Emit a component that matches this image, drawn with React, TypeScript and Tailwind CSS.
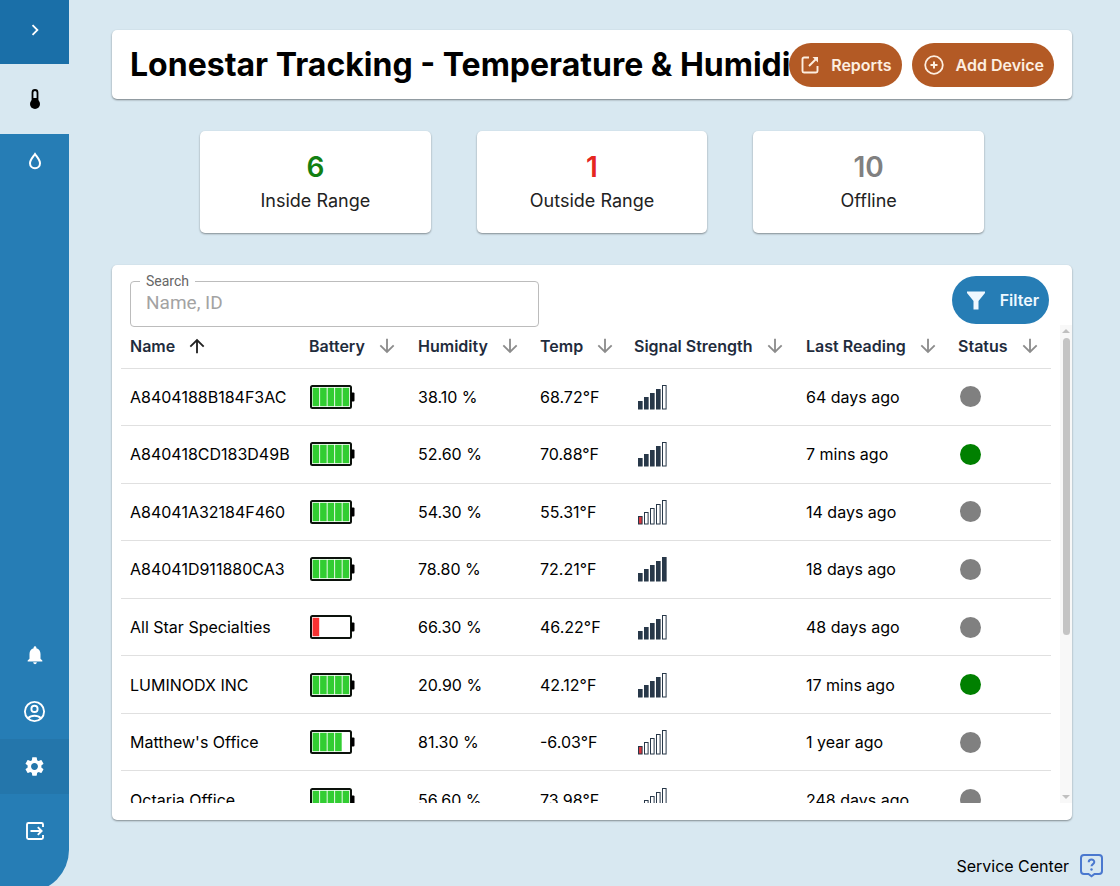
import React, { useState } from 'react';
import {
  MdArrowDownward,
  MdArrowUpward,
  MdChevronRight,
  MdNotifications,
  MdSettings,
} from 'react-icons/md';

interface Device {
  name: string;
  battery: number;
  humidity: string;
  temp: string;
  signal: number;
  lastReading: string;
  online: boolean;
}

const devices: Device[] = [
  { name: 'A8404188B184F3AC', battery: 5, humidity: '38.10 %', temp: '68.72°F', signal: 4, lastReading: '64 days ago', online: false },
  { name: 'A840418CD183D49B', battery: 5, humidity: '52.60 %', temp: '70.88°F', signal: 4, lastReading: '7 mins ago', online: true },
  { name: 'A84041A32184F460', battery: 5, humidity: '54.30 %', temp: '55.31°F', signal: 1, lastReading: '14 days ago', online: false },
  { name: 'A84041D911880CA3', battery: 5, humidity: '78.80 %', temp: '72.21°F', signal: 5, lastReading: '18 days ago', online: false },
  { name: 'All Star Specialties', battery: 1, humidity: '66.30 %', temp: '46.22°F', signal: 4, lastReading: '48 days ago', online: false },
  { name: 'LUMINODX INC', battery: 5, humidity: '20.90 %', temp: '42.12°F', signal: 4, lastReading: '17 mins ago', online: true },
  { name: "Matthew's Office", battery: 4, humidity: '81.30 %', temp: '-6.03°F', signal: 1, lastReading: '1 year ago', online: false },
  { name: 'Octaria Office', battery: 5, humidity: '56.60 %', temp: '73.98°F', signal: 1, lastReading: '248 days ago', online: false },
];

const columns = [
  { label: 'Name', width: 'w-[179px]' },
  { label: 'Battery', width: 'w-[109px]' },
  { label: 'Humidity', width: 'w-[122px]' },
  { label: 'Temp', width: 'w-[94px]' },
  { label: 'Signal Strength', width: 'w-[172px]' },
  { label: 'Last Reading', width: 'w-[152px]' },
  { label: 'Status', width: 'w-[102px]' },
];

const stats = [
  { value: 6, label: 'Inside Range', color: 'text-[#128012]' },
  { value: 1, label: 'Outside Range', color: 'text-[#e5261f]' },
  { value: 10, label: 'Offline', color: 'text-[#808080]' },
];

const BatteryIcon: React.FC<{ level: number }> = ({ level }) => (
  <svg width="46" height="26" viewBox="0 0 46 26" role="img" aria-label={`Battery ${level} of 5`} className="block">
    <rect x="2" y="2" width="40" height="22" rx="1.5" fill="#fff" stroke="#0c120c" strokeWidth="2" />
    <rect x="42" y="8.5" width="3.5" height="9" rx="1" fill="#000" />
    {Array.from({ length: level }, (_, i) => (
      <rect key={i} x={3.6 + i * 7.5} y="3.8" width="6.6" height="18.4" fill={level === 1 ? '#f83232' : '#32cd32'} />
    ))}
  </svg>
);

const SignalIcon: React.FC<{ level: number }> = ({ level }) => (
  <svg width="29" height="26" viewBox="0 0 29 26" role="img" aria-label={`Signal ${level} of 5`} className="block">
    {[0, 1, 2, 3, 4].map((i) => {
      const height = 7.5 + i * 4;
      const fill = i < level ? (level === 1 ? '#d9363e' : '#283849') : '#fff';
      return (
        <rect key={i} x={0.5 + i * 6} y={25 - height} width="3.6" height={height} fill={fill} stroke="#283849" strokeWidth="1" />
      );
    })}
  </svg>
);

const Sidebar: React.FC = () => (
  <nav className="-mb-1.5 flex w-[69px] shrink-0 flex-col overflow-hidden rounded-br-[42px] bg-[#267db5] text-white">
    <button type="button" aria-label="Expand menu" className="flex h-16 items-center justify-center bg-[#1a6fa8] pb-1">
      <MdChevronRight size={22} />
    </button>
    <a href="#temperature" aria-label="Temperature" className="flex h-[70px] items-center justify-center bg-[#d8e8f1] text-black">
      <svg width="14" height="22" viewBox="0 0 14 22">
        <path d="M4.5 13V4.500a2.500 2.500 0 0 1 5 0V13" fill="none" stroke="currentColor" strokeWidth="1.800" />
        <circle cx="7" cy="16" r="5" fill="currentColor" />
        <path d="M5 10h4v5H5Z" fill="currentColor" />
      </svg>
    </a>
    <a href="#humidity" aria-label="Humidity" className="flex h-[54px] items-center justify-center">
      <svg width="14" height="18" viewBox="0 0 14 18" fill="none" stroke="currentColor" strokeWidth="2">
        <path d="M7 2C5 5 2 8 2 11.200a5 5 0 0 0 10 0C12 8 9 5 7 2Z" />
      </svg>
    </a>
    <div className="mt-auto flex flex-col pb-6">
      <button type="button" aria-label="Notifications" className="flex h-14 items-center justify-center">
        <MdNotifications size={22} />
      </button>
      <button type="button" aria-label="Account" className="flex h-14 items-center justify-center">
        <svg width="25" height="25" viewBox="0 0 24 24" fill="none" stroke="currentColor" strokeWidth="1.8">
          <circle cx="12" cy="12" r="9.200" />
          <circle cx="12" cy="9.500" r="3" />
          <path d="M5.800 18.500c3-3.300 9.400-3.300 12.400 0" />
        </svg>
      </button>
      <button type="button" aria-label="Settings" className="flex h-[55px] items-center justify-center bg-[#2476ab]">
        <MdSettings size={23} />
      </button>
      <button type="button" aria-label="Log out" className="flex h-[74px] items-center justify-center">
        <svg width="20" height="20" viewBox="0 0 20 20" fill="none" stroke="currentColor" strokeWidth="1.9">
          <path d="M18 6V3.500A1.500 1.500 0 0 0 16.500 2h-13A1.500 1.500 0 0 0 2 3.500v13A1.500 1.500 0 0 0 3.500 18h13a1.500 1.500 0 0 0 1.500-1.500V14" />
          <path d="M5.500 10h11M12.800 6.200l3.800 3.800-3.800 3.800" />
        </svg>
      </button>
    </div>
  </nav>
);

const App: React.FC = () => {
  const [search, setSearch] = useState('');

  const rows = devices.filter((device) =>
    device.name.toLowerCase().includes(search.toLowerCase())
  );

  return (
    <div className="flex h-screen overflow-hidden bg-[#d8e8f1] font-['Inter',sans-serif] text-black">
      <Sidebar />

      <div className="flex min-w-0 flex-1 flex-col pl-[43px] pt-[30px]">
        <main className="mr-12 flex min-h-0 flex-1 flex-col">
          <header className="flex h-[69px] shrink-0 items-center rounded-[5px] bg-white px-[18px] shadow-[0_1px_2px_rgba(0,0,0,0.45)]">
            <h1 className="min-w-0 flex-1 overflow-hidden whitespace-nowrap text-[32px] font-bold leading-10">
              Lonestar Tracking - Temperature &amp; Humidity
            </h1>
            <div className="flex shrink-0 gap-[10px] text-base font-semibold text-[#fdeee0]">
              <button type="button" className="flex h-11 items-center gap-3 rounded-full bg-[#b35a25] pl-3 pr-[10px]">
                <svg width="18" height="18" viewBox="0 0 18 18" fill="none" stroke="currentColor" strokeWidth="1.900">
                  <path d="M8 1.500H3A1.500 1.500 0 0 0 1.500 3v12A1.500 1.500 0 0 0 3 16.500h12a1.500 1.500 0 0 0 1.500-1.500v-5" />
                  <path d="M8 10l7-7" />
                  <path d="M11.500 1H17v5.500Z" fill="currentColor" stroke="none" />
                </svg>
                Reports
              </button>
              <button type="button" className="flex h-11 items-center gap-3 rounded-full bg-[#b35a25] pl-3 pr-[10px]">
                <svg width="20" height="20" viewBox="0 0 20 20" fill="none" stroke="currentColor" strokeWidth="1.800">
                  <circle cx="10" cy="10" r="8.800" />
                  <path d="M10 6.500v7M6.500 10h7" strokeWidth="2" />
                </svg>
                Add Device
              </button>
            </div>
          </header>

          <section className="mt-8 flex shrink-0 justify-center gap-[46px] px-[88px]">
            {stats.map((stat) => (
              <div
                key={stat.label}
                className="flex h-[102px] flex-1 flex-col items-center rounded-[5px] bg-white pt-5 shadow-[0_1px_2px_rgba(0,0,0,0.4)]"
              >
                <span className={`text-[28px] font-semibold leading-8 ${stat.color}`}>{stat.value}</span>
                <span className="mt-1 text-lg leading-7 text-[#222]">{stat.label}</span>
              </div>
            ))}
          </section>

          <section className="mt-8 flex min-h-0 flex-1 flex-col rounded-[5px] bg-white pb-[17px] pl-[9px] shadow-[0_1px_2px_rgba(0,0,0,0.4)]">
            <div className="flex h-[60px] shrink-0 items-start justify-between pl-[9px] pr-[23px] pt-[11px]">
              <fieldset className="h-[51px] w-[409px] rounded-[4px] border border-[#bcbcbc] px-[9px] font-['Roboto',sans-serif]">
                <legend className="px-[6px] text-sm leading-[10px] text-[#666]">
                  <label htmlFor="search">Search</label>
                </legend>
                <input
                  id="search"
                  type="text"
                  value={search}
                  onChange={(e) => setSearch(e.target.value)}
                  placeholder="Name, ID"
                  className="block h-8 w-full px-[6px] text-[19px] outline-none placeholder:text-[#a3a3a3]"
                />
              </fieldset>
              <button
                type="button"
                className="flex h-12 items-center gap-3 rounded-full bg-[#267db5] pl-3 pr-[10px] text-base font-semibold text-[#eef8ff]"
              >
                <svg width="24" height="24" viewBox="0 0 24 24" fill="currentColor">
                  <path d="M3 3.500h18v1.500l-6.500 8v8.500h-5V13L3 5Z" />
                </svg>
                Filter
              </button>
            </div>

            <div className="flex min-h-0 flex-1">
              <div className="min-w-0 flex-1 overflow-hidden">
                <table className="h-[504px] w-full table-fixed border-collapse text-left text-base">
                  <thead>
                    <tr className="h-[43px] border-b border-[#e0e0e0]">
                      {columns.map((column) => (
                        <th key={column.label} className={`${column.width} p-0 pl-[9px] font-semibold text-[#1f2c3d]`}>
                          <button type="button" className="flex items-center gap-[11px] whitespace-nowrap">
                            {column.label}
                            {column.label === 'Name' ? (
                              <MdArrowUpward size={22} className="text-[#222]" />
                            ) : (
                              <MdArrowDownward size={22} className="text-[#8c8c8c]" />
                            )}
                          </button>
                        </th>
                      ))}
                    </tr>
                  </thead>
                  <tbody>
                    {rows.map((device) => (
                      <tr key={device.name} className="border-b border-[#e0e0e0]">
                        <td className="whitespace-nowrap pl-[9px]">{device.name}</td>
                        <td className="pl-[9px]">
                          <BatteryIcon level={device.battery} />
                        </td>
                        <td className="pl-[9px]">{device.humidity}</td>
                        <td className="pl-[9px]">{device.temp}</td>
                        <td className="pl-[13px]">
                          <SignalIcon level={device.signal} />
                        </td>
                        <td className="pl-[9px]">{device.lastReading}</td>
                        <td className="pl-[11px]">
                          <div
                            role="img"
                            aria-label={device.online ? 'Online' : 'Offline'}
                            className={`size-[21px] rounded-full ${device.online ? 'bg-[#008000]' : 'bg-[#808080]'}`}
                          />
                        </td>
                      </tr>
                    ))}
                  </tbody>
                </table>
              </div>

              {/* scroll track */}
              <div className="ml-[9px] flex w-3 shrink-0 flex-col items-center bg-[#f8f8f8]">
                <div className="mt-1 h-0 w-0 border-x-4 border-b-4 border-x-transparent border-b-[#c0c0c0]" />
                <div className="mt-[5px] h-[297px] w-[7px] rounded-full bg-[#c4c4c4]" />
                <div className="mb-1 mt-auto h-0 w-0 border-x-4 border-t-4 border-x-transparent border-t-[#c0c0c0]" />
              </div>
            </div>
          </section>
        </main>

        <footer className="flex h-[66px] shrink-0 items-end justify-end pb-2 pr-4">
          <a href="#service-center" className="flex items-center gap-[10px] text-base">
            Service Center
            <svg width="25" height="25" viewBox="0 0 25 25" fill="none" stroke="#4a78cf" strokeWidth="2">
              <path d="M5 2h15a3 3 0 0 1 3 3v13a3 3 0 0 1-3 3h-4.500L12.500 23.300 9.500 21H5a3 3 0 0 1-3-3V5a3 3 0 0 1 3-3Z" />
              <path d="M9.700 9.300c0-3.700 5.700-3.500 5.600-.2 0 2-2.800 2-2.800 4.200" />
              <circle cx="12.500" cy="16.500" r="1.200" fill="#4a78cf" stroke="none" />
            </svg>
          </a>
        </footer>
      </div>
    </div>
  );
};

export default App;
